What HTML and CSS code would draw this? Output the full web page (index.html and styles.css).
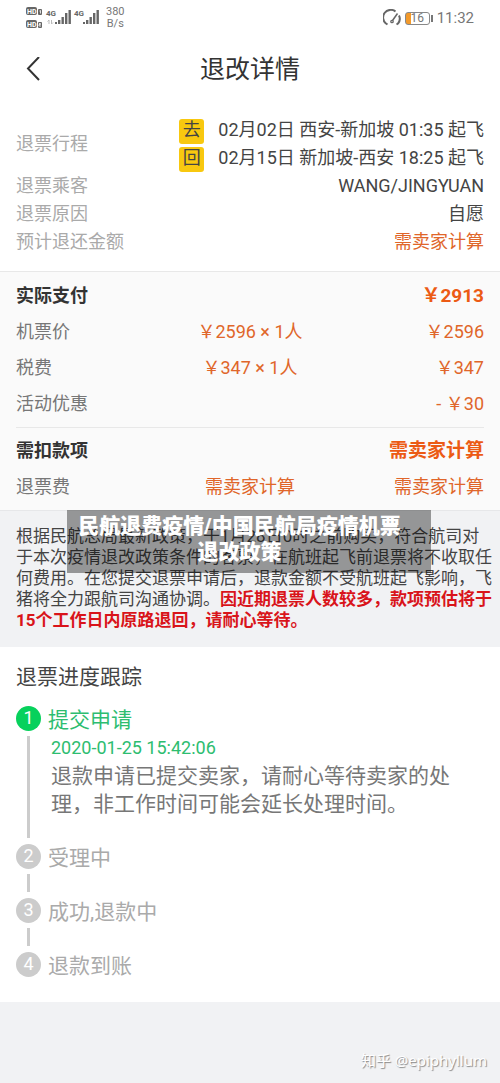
FILE: index.html
```html
<!DOCTYPE html>
<html lang="zh-CN">
<head>
<meta charset="utf-8">
<meta name="viewport" content="width=device-width, initial-scale=1">
<title>退改详情</title>
<link rel="stylesheet" href="styles.css">
</head>
<body>
<div class="page">
  <div class="status">
    <svg class="signal" width="76" height="24" viewBox="0 0 76 24" aria-hidden="true">
      <g fill="#666">
        <rect x="1" y="1" width="11" height="8" rx="2"/>
        <rect x="13" y="3" width="4" height="6" rx="1"/>
        <rect x="1" y="14" width="11" height="8" rx="2"/>
        <rect x="13" y="16" width="4" height="6" rx="1"/>
        <rect x="30" y="16" width="2" height="2"/>
        <rect x="33" y="14" width="2.400" height="4"/>
        <rect x="36.500" y="11" width="2.400" height="7"/>
        <rect x="40" y="7" width="2.400" height="11"/>
        <rect x="43.500" y="4" width="2.400" height="14"/>
        <rect x="58" y="16" width="2" height="2"/>
        <rect x="61" y="14" width="2.400" height="4"/>
        <rect x="64.500" y="11" width="2.400" height="7"/>
        <rect x="68" y="7" width="2.400" height="11"/>
        <rect x="71.500" y="4" width="2.400" height="14"/>
      </g>
      <g class="signal-hd">
        <text x="2" y="8">HD</text>
        <text x="2" y="21">HD</text>
      </g>
      <path d="M14.500 5l1-.5v3M14 17.500h1.500v1h-1.500v1.500h2" fill="none" stroke="#fff" stroke-width=".8"/>
      <path d="M24 18v-4l-1.500 1.500M26.500 14v4l1.500-1.500" fill="none" stroke="#bbb"/>
      <g class="signal-net">
        <text x="21" y="10">4G</text>
        <text x="49" y="10">4G</text>
      </g>
    </svg>
    <div class="speed">380<br>B/s</div>
    <div class="status-right">
      <svg width="18" height="18" viewBox="0 0 18 18" fill="none" stroke="#666" stroke-width="2" aria-hidden="true">
        <path d="M4.500 15.500L3 14.500A7.300 7.300 0 0 1 12.500 2.500"/>
        <path d="M16 6.500A7.500 7.500 0 0 1 15 14.500L13.500 15.500"/>
        <path d="M14.500 4.500L9.500 11.500" stroke-width="1.500"/>
        <circle cx="9" cy="12.500" r="1.200" stroke-width="1.300"/>
      </svg>
      <span class="battery"><span class="battery-box">16</span></span>
      <span class="clock">11:32</span>
    </div>
  </div>

  <header class="header">
    <button class="back" type="button" aria-label="返回">
      <svg width="16" height="26" viewBox="0 0 16 26" fill="none" stroke="#333" stroke-width="2" aria-hidden="true"><path d="M13 0L2 11.500L13 23"/></svg>
    </button>
    <h1 class="title">退改详情</h1>
  </header>

  <main>
    <dl class="info">
      <div class="info-row">
        <dt>退票行程</dt>
        <dd>
          <div class="leg"><span class="tag">去</span>02月02日 西安-新加坡 01:35 起飞</div>
          <div class="leg"><span class="tag">回</span>02月15日 新加坡-西安 18:25 起飞</div>
        </dd>
      </div>
      <div class="info-row"><dt>退票乘客</dt><dd>WANG/JINGYUAN</dd></div>
      <div class="info-row"><dt>退票原因</dt><dd>自愿</dd></div>
      <div class="info-row"><dt>预计退还金额</dt><dd class="money">需卖家计算</dd></div>
    </dl>

    <section class="bill">
      <table class="bill-table">
        <tr class="total"><th scope="row">实际支付</th><td></td><td>￥2913</td></tr>
        <tr><th scope="row">机票价</th><td>￥2596 × 1人</td><td>￥2596</td></tr>
        <tr><th scope="row">税费</th><td>￥347 × 1人</td><td>￥347</td></tr>
        <tr><th scope="row">活动优惠</th><td></td><td>- ￥30</td></tr>
      </table>
      <table class="bill-table">
        <tr class="total"><th scope="row">需扣款项</th><td></td><td>需卖家计算</td></tr>
        <tr><th scope="row">退票费</th><td>需卖家计算</td><td>需卖家计算</td></tr>
      </table>
    </section>

    <section class="notice">
      <p class="notice-text">根据民航总局最新政策，于1月28日0时之前购买，符合航司对<br>于本次疫情退改政策条件的客票，在航班起飞前退票将不收取任<br>何费用。在您提交退票申请后，退款金额不受航班起飞影响，飞<br>猪将全力跟航司沟通协调。<strong>因近期退票人数较多，款项预估将于<br>15个工作日内原路退回，请耐心等待。</strong></p>
      <div class="caption">民航退费疫情/中国民航局疫情机票退改政策</div>
    </section>

    <section class="progress">
      <h2 class="progress-title">退票进度跟踪</h2>
      <ol class="steps">
        <li class="step done">
          <div class="rail"><span class="num">1</span></div>
          <div class="step-body">
            <div class="step-name">提交申请</div>
            <time class="step-time">2020-01-25 15:42:06</time>
            <p class="step-text">退款申请已提交卖家，请耐心等待卖家的处理，非工作时间可能会延长处理时间。</p>
          </div>
        </li>
        <li class="step"><div class="rail"><span class="num">2</span></div><div class="step-body">受理中</div></li>
        <li class="step"><div class="rail"><span class="num">3</span></div><div class="step-body">成功,退款中</div></li>
        <li class="step"><div class="rail"><span class="num">4</span></div><div class="step-body">退款到账</div></li>
      </ol>
    </section>
  </main>

  <footer class="footer">知乎 @epiphyllum</footer>
</div>
</body>
</html>
```

FILE: styles.css
```css
* { box-sizing: border-box; }
body, h1, h2, p, dl, dd, ol { margin: 0; padding: 0; }

body {
  background: #f1f2f4;
  color: #444;
  font: 18px/28px Roboto, "Noto Sans CJK SC", sans-serif;
}

.page { display: flex; flex-direction: column; min-height: 100vh; }

/* Status bar */
.status {
  display: flex;
  align-items: center;
  padding: 6px 26px 6px 25px;
  background: #fff;
  color: #777;
}
.signal-hd { fill: #fff; font-size: 7px; font-weight: 700; }
.signal-net { fill: #666; font-size: 8px; font-weight: 700; }
.speed { margin-left: 5px; font-size: 11px; line-height: 12px; text-align: center; }
.status-right { display: flex; align-items: center; gap: 4px; margin-left: auto; }
.battery { display: flex; align-items: center; }
.battery::after { content: ""; width: 2px; height: 7px; margin-left: 1px; background: #777; }
.battery-box {
  width: 25px;
  border: 1px solid #888;
  border-radius: 3px;
  background: linear-gradient(90deg, #f39a2b 5px, #fff 5px);
  font-size: 12px;
  line-height: 11px;
  text-align: center;
}
.clock { font-size: 15px; line-height: 20px; }

/* Title bar */
.header {
  display: grid;
  grid-template-columns: 50px 1fr 50px;
  align-items: center;
  padding: 13px 0 11px;
  background: #fff;
}
.back { display: flex; padding: 0 0 0 26px; border: 0; background: none; }
.title { color: #333; font-size: 25px; font-weight: 400; line-height: 42px; text-align: center; }

/* Trip summary */
.info { padding: 14px 16px 15px; background: #fff; }
.info-row { display: flex; align-items: center; justify-content: space-between; }
.info dt { color: #aaa; }
.info dd { text-align: right; }
.leg { display: flex; }
.tag {
  width: 25px;
  height: 25px;
  margin: 3px 14px 0 0;
  border-radius: 3px;
  background: #f8c80f;
  line-height: 22px;
  text-align: center;
}
.info .money { color: #e0662a; }

/* Price breakdown */
.bill { padding: 6px 16px 5px; border-top: 1px solid #e8e8e8; background: #fafafa; }
.bill-table { width: 100%; table-layout: fixed; border-collapse: collapse; }
.bill-table + .bill-table { margin-top: 5px; border-top: 1px solid #e8e8e8; }
.bill-table + .bill-table .total > * { padding-top: 5px; height: 41px; }
.bill-table th, .bill-table td { height: 36px; padding: 0; }
.bill-table th { color: #777; font-weight: 400; text-align: left; }
.bill-table td { color: #e0662a; text-align: center; }
.bill-table td:last-child { text-align: right; }
.bill-table .total th { color: #333; font-weight: 700; }
.bill-table .total td { color: #ec5a14; font-size: 19px; font-weight: 700; }

/* Policy notice */
.notice {
  position: relative;
  padding: 15px 0 16px 16px;
  border-top: 1px solid #e6e7e9;
}
.notice-text { font-size: 17px; line-height: 21px; white-space: nowrap; }
.notice-text strong { color: #d9141a; }
.caption {
  position: absolute;
  top: -1px;
  left: 67px;
  right: 69px;
  padding: 3px 29px 8px 10px;
  background: rgba(0, 0, 0, .38);
  color: #fff;
  font-size: 21px;
  font-weight: 900;
  line-height: 26px;
  text-align: center;
}

/* Refund progress */
.progress { padding: 16px 16px 22px; background: #fff; }
.progress-title { margin-bottom: 15px; color: #444; font-size: 21px; font-weight: 400; }
.steps { list-style: none; }
.step { display: grid; grid-template-columns: 25px 1fr; gap: 7px; color: #aaa; font-size: 21px; }
.rail { display: flex; flex-direction: column; align-items: center; gap: 5px; padding-bottom: 6px; }
.num {
  width: 25px;
  height: 25px;
  border-radius: 50%;
  background: #ccc;
  color: #fff;
  font-size: 18px;
  line-height: 23px;
  text-align: center;
}
.step:not(:last-child) .rail::after { content: ""; flex: 1; width: 3px; background: #ccc; }
.step-body { padding-bottom: 26px; }
.step:last-child > * { padding-bottom: 0; }
.done .num { background: #07d15c; }
.done .step-name, .step-time { color: #2dbd70; }
.step-time, .step-text { display: block; padding-left: 3px; }
.step-time { font-size: 18px; }
.step-text { padding-right: 26px; color: #777; }

.footer {
  flex: 1;
  padding: 46px 13px 10px;
  color: #fff;
  font: 15px/24px "Noto Sans", "Noto Sans CJK SC", sans-serif;
  text-align: right;
  text-shadow: 1px 1px 1px #888;
}
```
